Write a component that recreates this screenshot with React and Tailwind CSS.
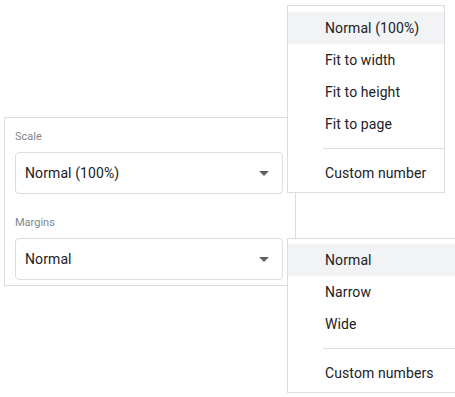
import React from 'react';

const font = { fontFamily: 'Roboto, "Liberation Sans", sans-serif' };

function ArrowDrop() {
    return (
        <svg width="24" height="24" viewBox="0 0 24 24" className="shrink-0">
            <path d="M7 10l5 5 5-5z" fill="#5f6368" />
        </svg>
    );
}

function Select({ value }) {
    return (
        <div className="w-[268px] h-[42px] border border-[#dadce0] rounded-[4px] flex items-center justify-between pl-[9px] pr-[6px]">
            <span className="text-[14px] leading-5 text-[#202124] tracking-[0.1px]">{value}</span>
            <ArrowDrop />
        </div>
    );
}

function Menu({ items, custom, className }) {
    return (
        <div className={`absolute bg-white border border-[#dadce0] ${className}`}>
            {items.map((item, i) => (
                <div
                    key={item}
                    className={`h-8 flex items-center pl-[37px] text-[14px] tracking-[0.1px] text-[#202124] ${i === 0 ? 'bg-[#f1f3f4]' : ''}`}
                >
                    {item}
                </div>
            ))}
            <div className="ml-[35px] my-2 h-px bg-[#dadce0]" />
            <div className="h-8 flex items-center pl-[37px] text-[14px] tracking-[0.1px] text-[#202124]">{custom}</div>
        </div>
    );
}

export default function App() {
    return (
        <div className="relative w-[455px] h-[397px] bg-white overflow-hidden" style={font}>
            <div className="ml-[4px] mt-[117px] w-[292px] h-[169px] border border-[#dadce0] px-[10px] pt-[11px]">
                <div className="text-[11px] leading-4 text-[#80868b]">Scale</div>
                <div className="mt-[7px]">
                    <Select value="Normal (100%)" />
                </div>
                <div className="mt-[21px] text-[11px] leading-4 text-[#80868b]">Margins</div>
                <div className="mt-[7px]">
                    <Select value="Normal" />
                </div>
            </div>

            <Menu
                className="left-[287px] top-[5px] w-[158px] pt-[6px] pb-[3px]"
                items={['Normal (100%)', 'Fit to width', 'Fit to height', 'Fit to page']}
                custom="Custom number"
            />
            <Menu
                className="left-[287px] top-[238px] w-[190px] pt-[5px] pb-[3px]"
                items={['Normal', 'Narrow', 'Wide']}
                custom="Custom numbers"
            />
        </div>
    );
}
